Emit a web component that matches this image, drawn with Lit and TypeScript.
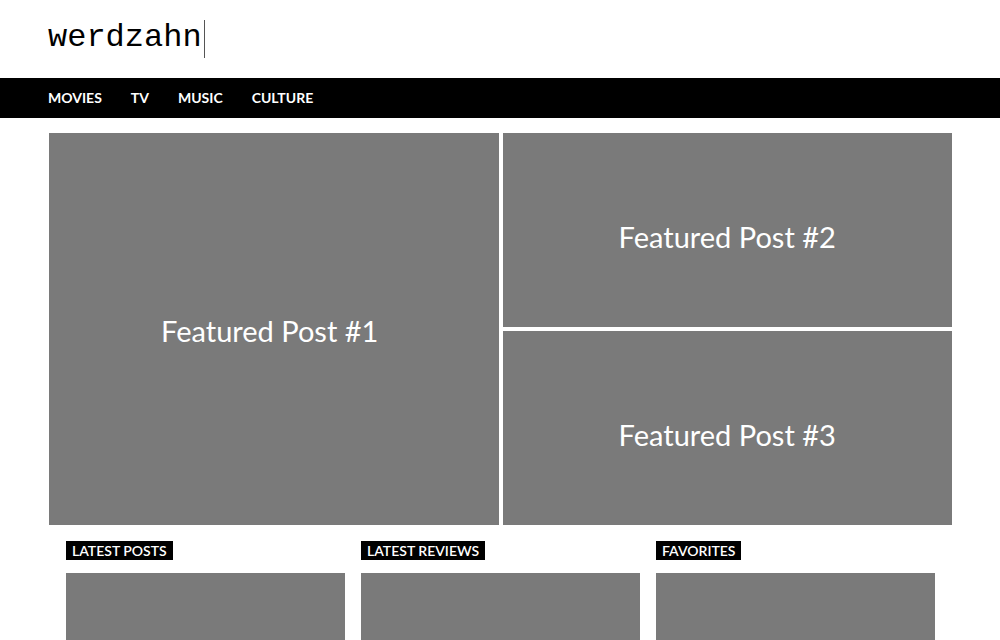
import { LitElement, html, css } from "lit";
import { customElement } from "lit/decorators.js";

@customElement("app-root")
export class AppRoot extends LitElement {
  static styles = css`
    :host { display: block; height: 100vh; overflow: hidden; background: #fff; font-family: Lato, sans-serif; }
    * { box-sizing: border-box; }
    header { height: 78px; padding: 20px 48px 0; }
    .logo { display: inline-block; height: 38px; padding: 2px 2px 0 0; border-right: 1px solid #555; font: 32px/32px "Liberation Mono", monospace; color: #000; text-decoration: none; }
    nav { display: flex; gap: 29px; align-items: center; height: 40px; padding: 0 48px; background: #000; }
    nav a { color: #fff; font-size: 14px; font-weight: 700; line-height: 20px; text-decoration: none; }
    .featured { display: grid; grid-template-columns: 1fr 1fr; grid-template-rows: 194px 194px; gap: 4px; padding: 15px 48px 16px 49px; }
    .post { display: flex; align-items: center; justify-content: center; padding-top: 14px; background: #7a7a7a; color: #fff; font: 29px/36px Lato, sans-serif; text-decoration: none; }
    .lead { grid-row: span 2; padding-top: 4px; padding-right: 8px; }
    .columns { display: grid; grid-template-columns: repeat(3, 1fr); gap: 16px; padding: 0 65px 0 66px; }
    h2 { width: fit-content; margin: 0 0 13px; padding: 0 6px; background: #000; color: #fff; font-size: 14px; font-weight: 600; line-height: 19px; }
    .card { height: 200px; background: #7a7a7a; }
  `;

  render() {
    return html`
      <header><a class="logo" href="#">werdzahn</a></header>
      <nav>${["MOVIES", "TV", "MUSIC", "CULTURE"].map((t) => html`<a href="#">${t}</a>`)}</nav>
      <main>
        <section class="featured">
          ${[1, 2, 3].map((n) => html`<a href="#" class="post ${n === 1 ? "lead" : ""}">Featured Post #${n}</a>`)}
        </section>
        <div class="columns">
          ${["LATEST POSTS", "LATEST REVIEWS", "FAVORITES"].map((t) => html`<section><h2>${t}</h2><div class="card"></div></section>`)}
        </div>
      </main>
    `;
  }
}
